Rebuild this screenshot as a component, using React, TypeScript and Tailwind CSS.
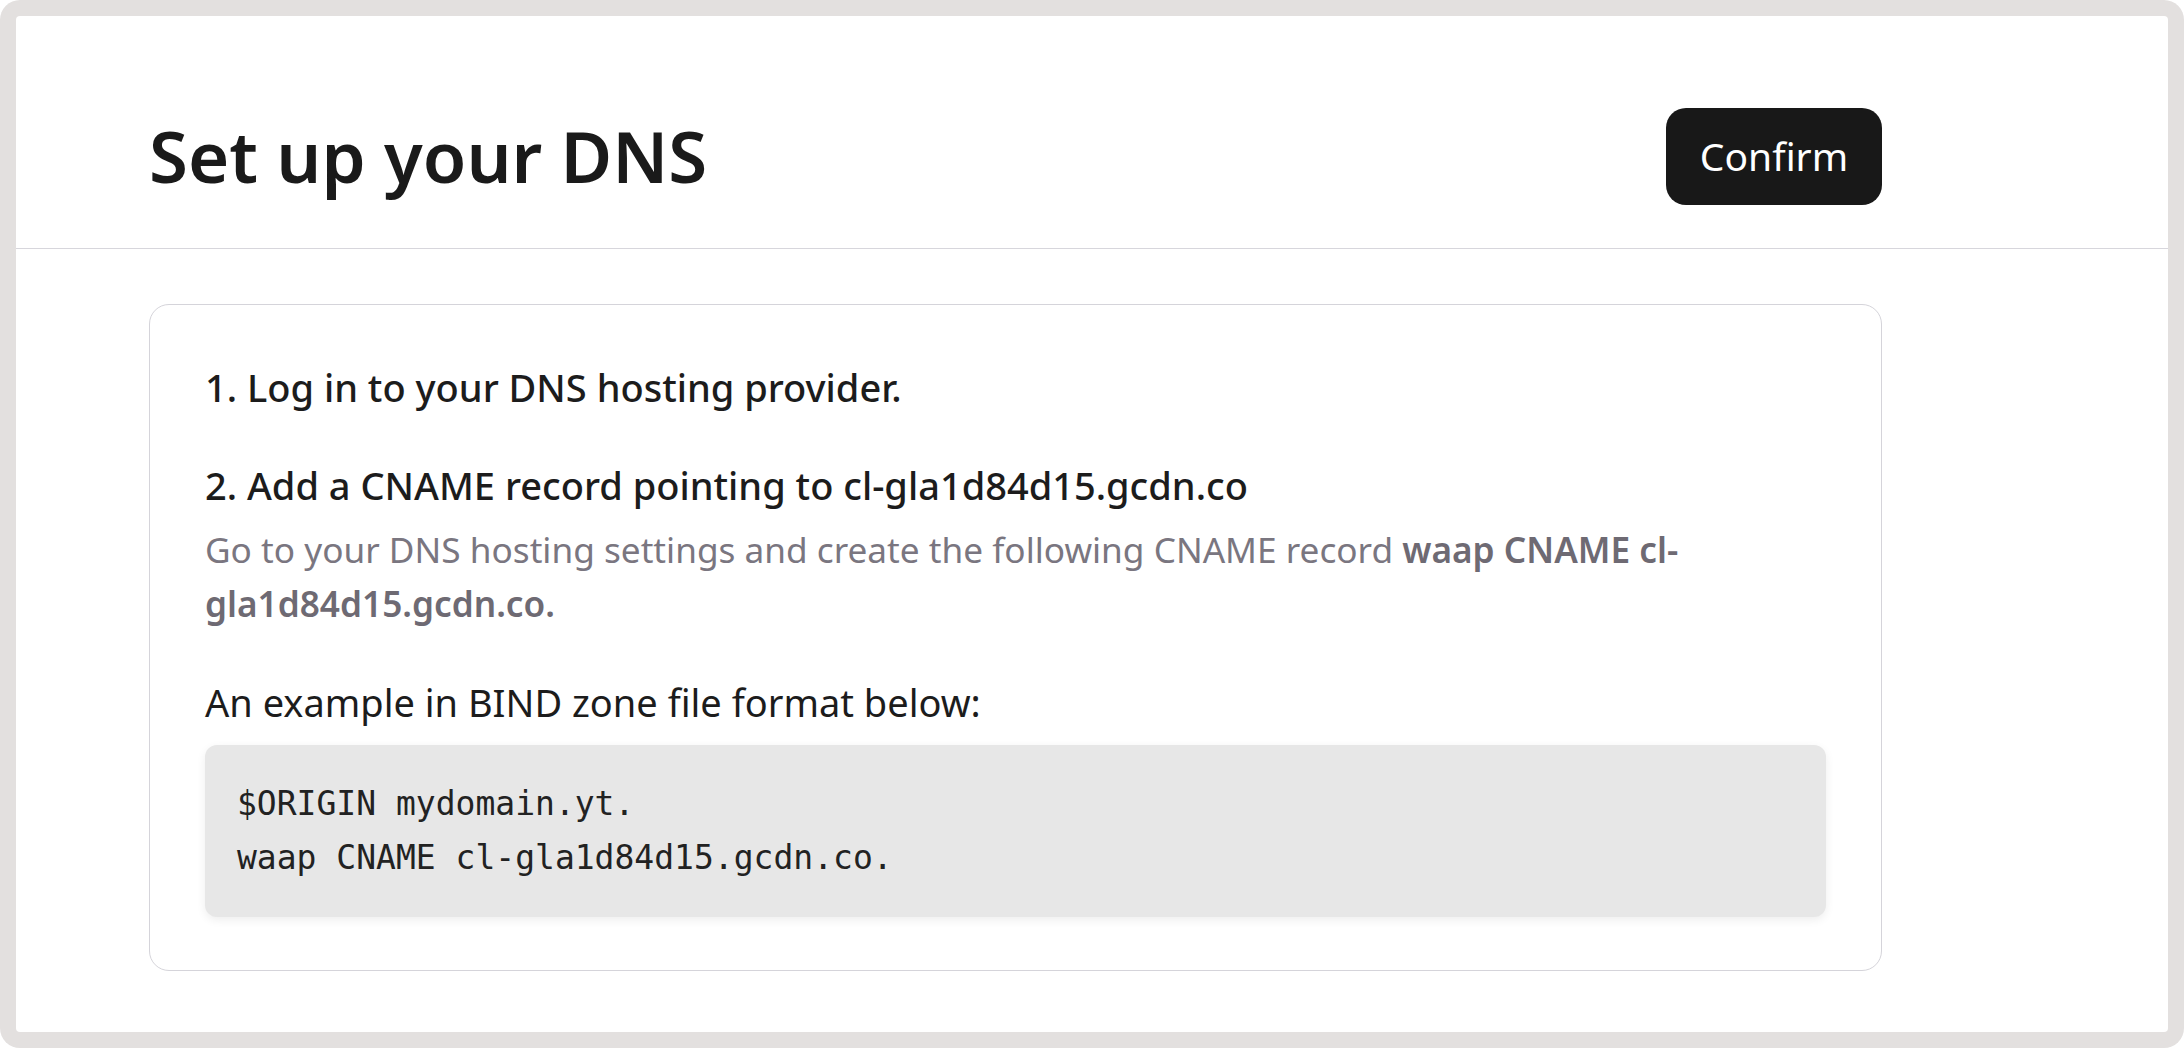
export default function App() {
  return (
    <div className="h-[1048px] w-full bg-white font-['Noto_Sans',sans-serif]">
      {/* grey frame around the page */}
      <div className="h-full rounded-[20px] bg-[#e3e0df] p-4">
        <div className="h-full rounded-[4px] bg-white">
          {/* Header */}
          <header className="border-b border-[#d7d6dc] pt-[92px] pb-[43px]">
            <div className="ml-[133px] flex w-[1733px] items-center justify-between">
              <h1 className="text-[70.7px] leading-none font-semibold text-[#1a1a1a]">
                Set up your DNS
              </h1>
              <button className="h-[97px] w-[216px] rounded-[20px] bg-[#181818] text-[39px] text-white">
                Confirm
              </button>
            </div>
          </header>

          {/* Instructions card */}
          <section className="mt-[55px] ml-[133px] w-[1733px] rounded-[20px] border border-[#d5d4da] px-[55px] pt-[55px] pb-[53px] text-[38px] leading-[54px] text-[#1c1c1c]">
            <p className="font-medium">1. Log in to your DNS hosting provider.</p>
            <p className="mt-[44px] font-medium">2. Add a CNAME record pointing to cl-gla1d84d15.gcdn.co</p>
            <p className="mt-[10px] text-[35.2px] text-[#7a7680]">
              Go to your DNS hosting settings and create the following CNAME record{" "}
              <span className="font-semibold text-[#6e6a73]">waap CNAME cl-gla1d84d15.gcdn.co.</span>
            </p>
            <p className="mt-[45px]">An example in BIND zone file format below:</p>
            <pre className="mt-4 rounded-[12px] bg-[#e7e7e7] p-8 font-['DejaVu_Sans_Mono',monospace] text-[33px] leading-[54px] text-[#222] shadow-[0_3px_10px_rgba(0,0,0,0.07)]">
              {"$ORIGIN mydomain.yt.\nwaap CNAME cl-gla1d84d15.gcdn.co."}
            </pre>
          </section>
        </div>
      </div>
    </div>
  );
}
